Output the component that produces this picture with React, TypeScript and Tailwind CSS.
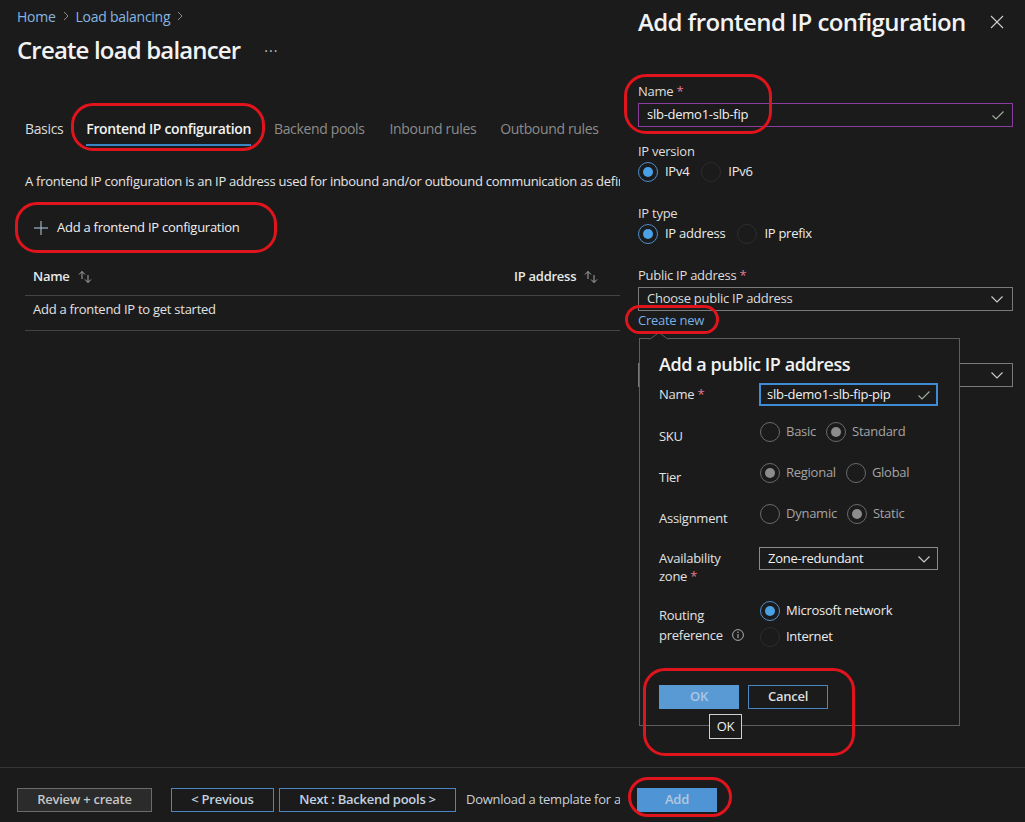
import React from "react";

function Chevron({ className = "" }: { className?: string }) {
  return (
    <svg width="14" height="14" viewBox="0 0 14 14" className={className}>
      <polyline points="1.5,4.5 7,10 12.5,4.5" fill="none" stroke="currentColor" strokeWidth="1.1" />
    </svg>
  );
}

function Check({ className = "" }: { className?: string }) {
  return (
    <svg width="12" height="12" viewBox="0 0 12 12" className={className}>
      <polyline points="0.5,6.5 4,10 11.5,2.5" fill="none" stroke="currentColor" strokeWidth="1.1" />
    </svg>
  );
}

function Crumb() {
  return (
    <svg width="8" height="10" viewBox="0 0 8 10" className="text-[#8a8a8a] mx-[6px]">
      <polyline points="2,1 6,5 2,9" fill="none" stroke="currentColor" strokeWidth="1" />
    </svg>
  );
}

type RState = "on" | "off" | "dark" | "gon" | "goff";

function Radio({ s }: { s: RState }) {
  if (s === "on")
    return (
      <span className="w-[20px] h-[20px] rounded-full border border-[#4f8ecb] flex items-center justify-center shrink-0">
        <span className="block w-[10px] h-[10px] rounded-full bg-[#4ba1e6]" />
      </span>
    );
  if (s === "gon")
    return (
      <span className="w-[20px] h-[20px] rounded-full border border-[#6a6a6a] flex items-center justify-center shrink-0">
        <span className="block w-[10px] h-[10px] rounded-full bg-[#8c8c8c]" />
      </span>
    );
  if (s === "goff") return <span className="block w-[20px] h-[20px] rounded-full border border-[#6a6a6a] shrink-0" />;
  return <span className="block w-[20px] h-[20px] rounded-full border border-[#2c2c2c] shrink-0" />;
}

function Ellipse({ c }: { c: string }) {
  return <div className={"absolute border-[3px] border-[#e0141c] rounded-[22px] pointer-events-none " + c} />;
}

function SortIcon() {
  return (
    <svg width="16" height="14" viewBox="0 0 16 14" className="ml-[7px] text-[#a8a8a8]">
      <polyline points="2,4.5 5,1.5 8,4.5" fill="none" stroke="currentColor" strokeWidth="1" />
      <line x1="5" y1="1.5" x2="5" y2="9" stroke="currentColor" strokeWidth="1" />
      <polyline points="8,9.5 11,12.5 14,9.5" fill="none" stroke="currentColor" strokeWidth="1" />
      <line x1="11" y1="5" x2="11" y2="12.5" stroke="currentColor" strokeWidth="1" />
    </svg>
  );
}

export default function App() {
  return (
    <div className="relative w-[1025px] h-[822px] bg-[#1b1b1b] text-[#e2e2e2] overflow-hidden flex flex-col font-['Open_Sans','Noto_Sans',sans-serif] text-[13px] tracking-[-0.02em]">
      <div className="flex h-[767px]">
        {/* Left column */}
        <div className="w-[620px] shrink-0 overflow-hidden pl-[17px] pt-[6px] whitespace-nowrap">
          <div className="flex items-center h-[20px] text-[14px] text-[#86b6e0]">
            <span>Home</span>
            <Crumb />
            <span>Load balancing</span>
            <Crumb />
          </div>
          <div className="mt-[8px] flex items-center h-[32px]">
            <h1 className="text-[24px] font-semibold text-[#f2f2f2] leading-[32px] tracking-[-0.035em]">Create load balancer</h1>
            <span className="ml-[24px] text-[#c4c4c4] text-[14px] tracking-[1px]">···</span>
          </div>
          <div className="mt-[53px] flex pl-[8px] gap-[23px] text-[14px] tracking-[-0.025em]">
            <div className="h-[27px] leading-[20px] text-[#dcdcdc]">Basics</div>
            <div className="h-[27px] leading-[20px] font-semibold text-[#f2f2f2] border-b-[2px] border-[#3b84c4] pb-[5px]">
              Frontend IP configuration
            </div>
            <div className="leading-[20px] text-[#8c8c8c]">Backend pools</div>
            <div className="leading-[20px] text-[#8c8c8c] ml-[2px]">Inbound rules</div>
            <div className="leading-[20px] text-[#8c8c8c] ml-[1px]">Outbound rules</div>
          </div>
          <div className="mt-[25px] pl-[8px] leading-[20px] text-[#e6e6e6]">
            A frontend IP configuration is an IP address used for inbound and/or outbound communication as defined within the load balancing rules
          </div>
          <div className="mt-[27px] pl-[17px] flex items-center h-[20px]">
            <svg width="14" height="14" viewBox="0 0 14 14" className="text-[#9fb4c8]">
              <line x1="7" y1="0" x2="7" y2="14" stroke="currentColor" strokeWidth="1.2" />
              <line x1="0" y1="7" x2="14" y2="7" stroke="currentColor" strokeWidth="1.2" />
            </svg>
            <span className="ml-[9px] text-[#f0f0f0]">Add a frontend IP configuration</span>
          </div>
          <div className="mt-[21px] ml-[8px]">
            <div className="h-[37px] border-b border-[#444444] grid grid-cols-[481px_1fr] items-center pl-[8px] font-semibold text-[#e8e8e8]">
              <div className="flex items-center">
                Name
                <SortIcon />
              </div>
              <div className="flex items-center">
                IP address
                <SortIcon />
              </div>
            </div>
            <div className="h-[35px] border-b border-[#444444] pl-[8px] pt-[3px] leading-[20px] text-[#e2e2e2]">
              Add a frontend IP to get started
            </div>
          </div>
        </div>

        {/* Right panel */}
        <div className="relative flex-1 pl-[18px] pr-[12px] pt-[8px] text-[#dedede]">
          <div className="h-[28px] flex items-center justify-between">
            <h2 className="text-[24px] font-semibold text-[#f2f2f2] leading-[28px] tracking-[-0.025em] whitespace-nowrap">Add frontend IP configuration</h2>
            <svg width="14" height="14" viewBox="0 0 14 14" className="mr-[9px] text-[#cfcfcf] shrink-0">
              <line x1="1" y1="1" x2="13" y2="13" stroke="currentColor" strokeWidth="1.1" />
              <line x1="13" y1="1" x2="1" y2="13" stroke="currentColor" strokeWidth="1.1" />
            </svg>
          </div>

          <div className="mt-[45px] leading-[20px]">
            Name <span className="text-[#e07a93]">*</span>
          </div>
          <div className="mt-[2px] h-[24px] border border-[#8b3d9e] flex items-center justify-between pl-[8px] pr-[8px] text-[#f0f0f0]">
            <span>slb-demo1-slb-fip</span>
            <Check className="text-[#9fb39d]" />
          </div>

          <div className="mt-[14px] leading-[20px]">IP version</div>
          <div className="mt-[1px] flex items-center h-[20px]">
            <Radio s="on" />
            <span className="ml-[7px] text-[#ececec]">IPv4</span>
            <span className="ml-[12px]"><Radio s="dark" /></span>
            <span className="ml-[7px] text-[#ececec]">IPv6</span>
          </div>

          <div className="mt-[21px] leading-[20px]">IP type</div>
          <div className="mt-[1px] flex items-center h-[20px]">
            <Radio s="on" />
            <span className="ml-[7px] text-[#ececec]">IP address</span>
            <span className="ml-[12px]"><Radio s="dark" /></span>
            <span className="ml-[7px] text-[#ececec]">IP prefix</span>
          </div>

          <div className="mt-[21px] leading-[20px]">
            Public IP address <span className="text-[#e07a93]">*</span>
          </div>
          <div className="mt-[2px] h-[24px] border border-[#7a7a7a] flex items-center justify-between pl-[8px] pr-[8px] text-[#dcdcdc]">
            <span>Choose public IP address</span>
            <Chevron className="text-[#d0d0d0]" />
          </div>
          <div className="leading-[18px] text-[#7ab0e2]">Create new</div>

          <div className="mt-[12px] h-[20px]" />
          <div className="mt-[2px] h-[24px] border border-[#7a7a7a] flex items-center justify-end pr-[8px]">
            <Chevron className="text-[#d0d0d0]" />
          </div>

          {/* Popup */}
          <div className="absolute left-[19px] top-[338px] w-[321px] h-[388px] border border-[#5e5e5e] bg-[#1b1b1b] pl-[19px] pt-[13px]">
            <svg width="20" height="8" viewBox="0 0 20 8" className="absolute left-[9px] top-[-7px]">
              <polygon points="0,8 10,0.5 20,8" fill="#1b1b1b" stroke="#5e5e5e" strokeWidth="1" />
              <line x1="0.5" y1="7.6" x2="19.5" y2="7.6" stroke="#1b1b1b" strokeWidth="1.5" />
            </svg>
            <div className="text-[18px] font-semibold leading-[24px] text-[#f2f2f2] tracking-[-0.025em]">Add a public IP address</div>

            <div className="mt-[7px] flex h-[23px] items-center">
              <div className="w-[100px] text-[#e2e2e2]">
                Name <span className="text-[#e07a93]">*</span>
              </div>
              <div className="w-[179px] h-[23px] border-[2px] border-[#3f8bd4] flex items-center justify-between pl-[6px] pr-[6px] text-[#f0f0f0]">
                <span>slb-demo1-slb-fip-pip</span>
                <Check className="text-[#9fb39d]" />
              </div>
            </div>

            {[
              { l: "SKU", a: "Basic", as: "goff" as RState, b: "Standard", bs: "gon" as RState },
              { l: "Tier", a: "Regional", as: "gon" as RState, b: "Global", bs: "goff" as RState },
              { l: "Assignment", a: "Dynamic", as: "goff" as RState, b: "Static", bs: "gon" as RState },
            ].map((r, i) => (
              <div key={r.l} className={(i === 0 ? "mt-[14px]" : "mt-[17px]") + " flex h-[24px]"}>
                <div className="w-[100px] mt-[6px] leading-[20px] text-[#e2e2e2]">{r.l}</div>
                <div className="flex items-center h-[24px] pl-[1px]">
                  <Radio s={r.as} />
                  <span className="ml-[6px] text-[#a4a4a4]">{r.a}</span>
                  <span className="ml-[10px]"><Radio s={r.bs} /></span>
                  <span className="ml-[6px] text-[#a4a4a4]">{r.b}</span>
                </div>
              </div>
            ))}

            <div className="mt-[21px] flex items-start">
              <div className="w-[100px] mt-[2px] leading-[18px] text-[#e2e2e2]">
                Availability
                <br />
                zone <span className="text-[#e07a93]">*</span>
              </div>
              <div className="w-[179px] h-[23px] border border-[#8a8a8a] flex items-center justify-between pl-[8px] pr-[6px] text-[#f0f0f0]">
                <span>Zone-redundant</span>
                <Chevron className="text-[#d0d0d0]" />
              </div>
            </div>

            <div className="mt-[16px] flex items-start">
              <div className="w-[100px] mt-[4px] leading-[20px] text-[#e2e2e2]">
                Routing
                <br />
                <span className="inline-flex items-center">
                  preference
                  <svg width="12" height="12" viewBox="0 0 12 12" className="ml-[9px] text-[#bdbdbd]">
                    <circle cx="6" cy="6" r="5.4" fill="none" stroke="currentColor" strokeWidth="0.9" />
                    <line x1="6" y1="5" x2="6" y2="9" stroke="currentColor" strokeWidth="1" />
                    <circle cx="6" cy="3.3" r="0.7" fill="currentColor" />
                  </svg>
                </span>
              </div>
              <div className="flex flex-col gap-[6px] pl-[1px]">
                <div className="flex items-center h-[20px]">
                  <Radio s="on" />
                  <span className="ml-[6px] text-[#ececec]">Microsoft network</span>
                </div>
                <div className="flex items-center h-[20px]">
                  <Radio s="dark" />
                  <span className="ml-[6px] text-[#ececec]">Internet</span>
                </div>
              </div>
            </div>

            <div className="mt-[38px] flex gap-[9px]">
              <div className="w-[80px] h-[24px] bg-[#5a9ad4] flex items-center justify-center font-semibold text-[#a9c7e4]">OK</div>
              <div className="w-[80px] h-[24px] border border-[#4a87c2] flex items-center justify-center font-semibold text-[#dedede]">Cancel</div>
            </div>

            <div className="absolute left-[69px] top-[375px] w-[33px] h-[25px] border border-[#cfcfcf] bg-[#1b1b1b] flex items-center justify-center text-[#f0f0f0]">
              OK
            </div>
          </div>
        </div>
      </div>

      {/* Footer */}
      <div className="flex-1 border-t border-[#353535] flex">
        <div className="w-[620px] shrink-0 overflow-hidden whitespace-nowrap pl-[17px] pt-[20px] flex items-start">
          <div className="shrink-0 w-[135px] h-[24px] bg-[#2b2b2b] border border-[#6b6b6b] flex items-center justify-center font-semibold text-[#c6c6c6]">
            Review + create
          </div>
          <div className="shrink-0 ml-[19px] w-[103px] h-[24px] border border-[#4a87c2] flex items-center justify-center font-semibold text-[#c3d2e0]">
            &lt; Previous
          </div>
          <div className="shrink-0 ml-[5px] w-[177px] h-[24px] border border-[#4a87c2] flex items-center justify-center font-semibold text-[#c3d2e0]">
            Next : Backend pools &gt;
          </div>
          <div className="shrink-0 ml-[10px] h-[24px] flex items-center text-[#c9d2da]">Download a template for a</div>
        </div>
        <div className="pl-[17px] pt-[20px]">
          <div className="w-[80px] h-[24px] bg-[#4f95d6] flex items-center justify-center font-semibold text-[#b3c8dc]">Add</div>
        </div>
      </div>

      {/* Annotation ellipses */}
      <Ellipse c="left-[71px] top-[103px] w-[194px] h-[48px]" />
      <Ellipse c="left-[15px] top-[202px] w-[262px] h-[51px]" />
      <Ellipse c="left-[624px] top-[74px] w-[148px] h-[60px]" />
      <Ellipse c="left-[625px] top-[305px] w-[94px] h-[29px] rounded-[12px]" />
      <Ellipse c="left-[643px] top-[668px] w-[212px] h-[88px]" />
      <Ellipse c="left-[628px] top-[777px] w-[104px] h-[40px] rounded-[14px]" />
    </div>
  );
}
